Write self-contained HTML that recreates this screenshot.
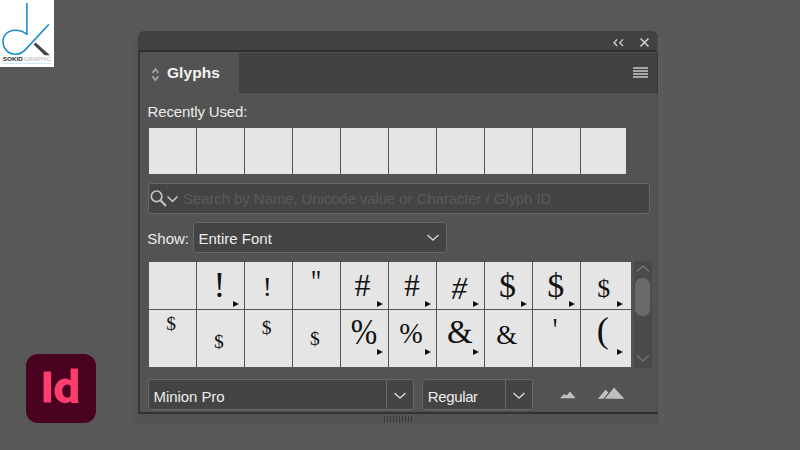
<!DOCTYPE html>
<html><head><meta charset="utf-8">
<style>
*{box-sizing:border-box;margin:0;padding:0}
html,body{width:800px;height:450px;overflow:hidden;background:#585858;font-family:"Liberation Sans",sans-serif;}
.abs{position:absolute}
#logo{left:0;top:0;width:54px;height:67px;background:#fff}
#panel{left:138px;top:31px;width:520px;height:394px;background:#535353;border-radius:6px 6px 0 0;overflow:hidden}
#titlebar{left:0;top:0;width:520px;height:20px;background:#424242}
#titleline{left:0;top:19.4px;width:520px;height:2px;background:#303030}
#tabrow{left:0;top:22px;width:520px;height:40px;background:#424242}
#tab{left:1px;top:22px;width:100px;height:41px;background:#535353}
#tabline{left:101px;top:61px;width:419px;height:1px;background:#3a3a3a}
.txt{color:#ececec;font-size:15px;white-space:nowrap;line-height:18px}
.cell{background:#e5e5e5;position:absolute}
.box{background:#444;border:1px solid #686868;border-radius:3px;position:absolute}
.g{position:absolute;font-family:"Liberation Serif",serif;color:#111;text-align:center;white-space:nowrap}
.tri{position:absolute;width:0;height:0;border-left:6px solid #111;border-top:3px solid transparent;border-bottom:3px solid transparent}
</style></head><body>
<div class="abs" id="logo">
<svg width="54" height="67" viewBox="0 0 54 67">
<path d="M26.9 3.6 V34.4 C24 31.7 19.5 30.2 15 30.2 C8 30.2 3 35.3 3 41.6 C3 48.8 8.5 54.2 15.5 54.2 C19.5 54.2 22.8 52.4 25.4 49.6 L48.5 24.8" fill="none" stroke="#1a8ccb" stroke-width="1.6" stroke-linecap="round" stroke-linejoin="round"/>
<path d="M35.6 42.6 L50 55.2 L44.6 55.2 L33.6 44.6 Z" fill="#454545"/>
<text x="2.8" y="60.9" font-family="Liberation Sans" font-size="4.7" font-weight="bold" fill="#2a2a2a" textLength="20" lengthAdjust="spacingAndGlyphs">SOKID</text>
<text x="24" y="60.9" font-family="Liberation Sans" font-size="4.7" fill="#b0b0b0" textLength="27" lengthAdjust="spacingAndGlyphs">GRAPHIC</text>
<rect x="3" y="62.9" width="48" height="1.1" fill="#cfe6f3"/>
</svg>
</div>

<div class="abs" style="left:133px;top:39px;width:5px;height:385px;background:#545454"></div>
<div class="abs" style="left:658px;top:39px;width:6px;height:386px;background:#5a5a5a"></div>
<div class="abs" id="panel">
 <div class="abs" id="titlebar"></div>
 <div class="abs" id="titleline"></div>
 <div class="abs" id="tabrow"></div>
 <div class="abs" id="tabline"></div>
 <div class="abs" id="tab"></div>
</div>

<div class="abs" style="left:138px;top:52px;width:1.5px;height:372.5px;background:#363636"></div>
<div class="abs" style="left:657px;top:38px;width:1px;height:375px;background:#4c4c4c"></div>
<div class="abs" style="left:657px;top:52px;width:1px;height:41px;background:#363636"></div>
<div class="abs" style="left:656.6px;top:413px;width:1.5px;height:11.5px;background:#343434"></div>
<!-- title bar icons -->
<svg class="abs" style="left:612px;top:37px" width="40" height="12" viewBox="0 0 40 12">
 <path d="M5.2 2.4 L2 5.7 L5.2 9 M11 2.4 L7.8 5.7 L11 9" fill="none" stroke="#d0d0d0" stroke-width="1.3"/>
 <path d="M28.5 1.5 L36.5 9.5 M36.5 1.5 L28.5 9.5" fill="none" stroke="#d0d0d0" stroke-width="1.6"/>
</svg>
<!-- hamburger -->
<div class="abs" style="left:633px;top:67px;width:15px;height:2px;background:#a8a8a8"></div>
<div class="abs" style="left:633px;top:70px;width:15px;height:2px;background:#a8a8a8"></div>
<div class="abs" style="left:633px;top:73px;width:15px;height:2px;background:#a8a8a8"></div>
<div class="abs" style="left:633px;top:76px;width:15px;height:2px;background:#a8a8a8"></div>

<!-- tab label -->
<svg class="abs" style="left:150px;top:66px" width="12" height="17" viewBox="150 66 12 17">
 <path d="M152.5 72.9 L155.4 69.2 L158.3 72.9 M152.5 76.3 L155.4 80 L158.3 76.3" fill="none" stroke="#a4a4a4" stroke-width="1.8"/>
</svg>
<div class="abs txt" style="left:167px;top:64.4px;font-weight:bold;font-size:15.5px;color:#f4f4f4;letter-spacing:0.05px">Glyphs</div>

<div class="abs txt" style="left:147.5px;top:103px;letter-spacing:-0.14px">Recently Used:</div>

<!-- recent cells -->
<div class="cell" style="left:149px;top:128px;width:47px;height:46px"></div>
<div class="cell" style="left:197px;top:128px;width:47px;height:46px"></div>
<div class="cell" style="left:245px;top:128px;width:47px;height:46px"></div>
<div class="cell" style="left:293px;top:128px;width:47px;height:46px"></div>
<div class="cell" style="left:341px;top:128px;width:47px;height:46px"></div>
<div class="cell" style="left:389px;top:128px;width:47px;height:46px"></div>
<div class="cell" style="left:437px;top:128px;width:47px;height:46px"></div>
<div class="cell" style="left:485px;top:128px;width:47px;height:46px"></div>
<div class="cell" style="left:533px;top:128px;width:47px;height:46px"></div>
<div class="cell" style="left:581px;top:128px;width:45px;height:46px"></div>

<!-- search -->
<div class="box" style="left:148px;top:183px;width:502px;height:31px"></div>
<svg class="abs" style="left:148px;top:186px" width="34" height="24" viewBox="0 0 34 24">
 <circle cx="8.6" cy="10.3" r="5.3" fill="none" stroke="#c2c2c2" stroke-width="1.7"/>
 <path d="M12.4 14.3 L18 20" stroke="#c2c2c2" stroke-width="2.2" fill="none"/>
 <path d="M19.5 10.5 L24.5 15.3 L29.5 10.5" stroke="#c2c2c2" stroke-width="1.7" fill="none"/>
</svg>
<div class="abs txt" style="left:183px;top:190px;color:#5a5a5a;letter-spacing:-0.1px">Search by Name, Unicode value or Character / Glyph ID</div>

<!-- show -->
<div class="abs txt" style="left:147.3px;top:230px">Show:</div>
<div class="box" style="left:193px;top:222px;width:254px;height:31px"></div>
<div class="abs txt" style="left:198.5px;top:230px">Entire Font</div>
<svg class="abs" style="left:426px;top:232px" width="14" height="10" viewBox="0 0 14 10"><path d="M1.5 3 L7 8 L12.5 3" fill="none" stroke="#d6d6d6" stroke-width="1.3"/></svg>

<!-- grid -->
<div class="cell" style="left:149px;top:262px;width:47px;height:47px"></div>
<div class="cell" style="left:197px;top:262px;width:47px;height:47px"></div>
<div class="cell" style="left:245px;top:262px;width:47px;height:47px"></div>
<div class="cell" style="left:293px;top:262px;width:47px;height:47px"></div>
<div class="cell" style="left:341px;top:262px;width:47px;height:47px"></div>
<div class="cell" style="left:389px;top:262px;width:47px;height:47px"></div>
<div class="cell" style="left:437px;top:262px;width:47px;height:47px"></div>
<div class="cell" style="left:485px;top:262px;width:47px;height:47px"></div>
<div class="cell" style="left:533px;top:262px;width:47px;height:47px"></div>
<div class="cell" style="left:581px;top:262px;width:50px;height:47px"></div>
<div class="cell" style="left:149px;top:310px;width:47px;height:57px"></div>
<div class="cell" style="left:197px;top:310px;width:47px;height:57px"></div>
<div class="cell" style="left:245px;top:310px;width:47px;height:57px"></div>
<div class="cell" style="left:293px;top:310px;width:47px;height:57px"></div>
<div class="cell" style="left:341px;top:310px;width:47px;height:57px"></div>
<div class="cell" style="left:389px;top:310px;width:47px;height:57px"></div>
<div class="cell" style="left:437px;top:310px;width:47px;height:57px"></div>
<div class="cell" style="left:485px;top:310px;width:47px;height:57px"></div>
<div class="cell" style="left:533px;top:310px;width:47px;height:57px"></div>
<div class="cell" style="left:581px;top:310px;width:50px;height:57px"></div>
<div class="g" id="g0_1" style="left:189.40px;top:267.72px;width:60px;font-size:35.5px;line-height:35.5px;">!</div>
<div class="tri" style="left:233px;top:301px"></div>
<div class="g" id="g0_2" style="left:237.20px;top:274.15px;width:60px;font-size:27px;line-height:27px;">!</div>
<div class="g" id="g0_3" style="left:285.60px;top:265.10px;width:60px;font-size:34px;line-height:34px;transform:scaleX(0.76);">"</div>
<div class="g" id="g0_4" style="left:332.50px;top:268.90px;width:60px;font-size:32px;line-height:32px;">#</div>
<div class="tri" style="left:377px;top:301px"></div>
<div class="g" id="g0_5" style="left:382.00px;top:270.30px;width:60px;font-size:31px;line-height:31px;">#</div>
<div class="tri" style="left:425px;top:301px"></div>
<div class="g" id="g0_6" style="left:429.20px;top:273.02px;width:60px;font-size:31px;line-height:31px;font-style:italic;">#</div>
<div class="tri" style="left:473px;top:301px"></div>
<div class="g" id="g0_7" style="left:477.60px;top:269.08px;width:60px;font-size:34px;line-height:34px;">$</div>
<div class="tri" style="left:521px;top:301px"></div>
<div class="g" id="g0_8" style="left:525.70px;top:268.58px;width:60px;font-size:34px;line-height:34px;">$</div>
<div class="tri" style="left:569px;top:301px"></div>
<div class="g" id="g0_9" style="left:573.70px;top:275.82px;width:60px;font-size:25.8px;line-height:25.8px;">$</div>
<div class="tri" style="left:617px;top:301px"></div>
<div class="g" id="g1_0" style="left:141.00px;top:314.38px;width:60px;font-size:19.5px;line-height:19.5px;">$</div>
<div class="g" id="g1_1" style="left:188.90px;top:332.25px;width:60px;font-size:19.5px;line-height:19.5px;">$</div>
<div class="g" id="g1_2" style="left:236.70px;top:317.82px;width:60px;font-size:19.5px;line-height:19.5px;">$</div>
<div class="g" id="g1_3" style="left:284.80px;top:328.63px;width:60px;font-size:19.5px;line-height:19.5px;">$</div>
<div class="g" id="g1_4" style="left:334.00px;top:313.88px;width:60px;font-size:36.5px;line-height:36.5px;transform:scaleX(0.87);">%</div>
<div class="tri" style="left:377px;top:349px"></div>
<div class="g" id="g1_5" style="left:381.30px;top:318.40px;width:60px;font-size:30px;line-height:30px;transform:scaleX(0.94);">%</div>
<div class="tri" style="left:425px;top:349px"></div>
<div class="g" id="g1_6" style="left:429.90px;top:316.12px;width:60px;font-size:33px;line-height:33px;">&amp;</div>
<div class="tri" style="left:473px;top:349px"></div>
<div class="g" id="g1_7" style="left:476.80px;top:322.25px;width:60px;font-size:27px;line-height:27px;">&amp;</div>
<div class="g" id="g1_8" style="left:525.30px;top:313.25px;width:60px;font-size:34px;line-height:34px;transform:scaleX(0.76);">'</div>
<div class="g" id="g1_9" style="left:572.70px;top:312.12px;width:60px;font-size:36px;line-height:36px;">(</div>
<div class="tri" style="left:617px;top:349px"></div>

<!-- scrollbar -->
<div class="abs" style="left:634px;top:261px;width:18px;height:107px;background:#4a4a4a"></div>
<div class="abs" style="left:635px;top:278px;width:15px;height:38px;background:#6a6a6a;border-radius:7px"></div>
<svg class="abs" style="left:635px;top:264px" width="16" height="10" viewBox="0 0 16 10"><path d="M2 7.5 L8 2 L14 7.5" fill="none" stroke="#777" stroke-width="1.2"/></svg>
<svg class="abs" style="left:635px;top:353px" width="16" height="10" viewBox="0 0 16 10"><path d="M2 2.5 L8 8 L14 2.5" fill="none" stroke="#777" stroke-width="1.2"/></svg>

<!-- bottom -->
<div class="box" style="left:148px;top:379px;width:266px;height:31px"></div>
<div class="abs" style="left:386px;top:380px;width:1px;height:29px;background:#686868"></div>
<div class="abs txt" style="left:153.6px;top:388px;letter-spacing:-0.08px">Minion Pro</div>
<svg class="abs" style="left:393px;top:390px" width="14" height="10" viewBox="0 0 14 10"><path d="M1.5 3 L7 8 L12.5 3" fill="none" stroke="#d6d6d6" stroke-width="1.3"/></svg>

<div class="box" style="left:422px;top:379px;width:111px;height:31px"></div>
<div class="abs" style="left:505px;top:380px;width:1px;height:29px;background:#686868"></div>
<div class="abs txt" style="left:427.7px;top:388px;letter-spacing:-0.35px">Regular</div>
<svg class="abs" style="left:512px;top:390px" width="14" height="10" viewBox="0 0 14 10"><path d="M1.5 3 L7 8 L12.5 3" fill="none" stroke="#d6d6d6" stroke-width="1.3"/></svg>

<svg class="abs" style="left:550px;top:378px" width="90" height="32" viewBox="550 378 90 32">
 <path d="M560 398.3 L564.1 394 L566.6 395.6 L570 391.6 L575.6 398.3 Z" fill="#c0c0c0"/>
 <path d="M597.8 398.8 L605.6 389.7 L608.4 392.6 L603.6 398.8 Z" fill="#c0c0c0"/>
 <path d="M604.9 398.8 L614.1 387.6 L624.3 398.8 Z" fill="#c0c0c0"/>
</svg>

<!-- bottom bar -->
<div class="abs" style="left:138px;top:411.5px;width:520px;height:3px;background:linear-gradient(#2e2e2e,#333 50%,#484848)"></div>
<div class="abs" style="left:138px;top:414px;width:520px;height:11px;background:#535353"></div>
<div class="abs" id="grip" style="left:384px;top:416px;width:28px;height:6px;background:repeating-linear-gradient(90deg,#383838 0 1px,transparent 1px 3px)"></div>

<!-- Id icon -->
<div class="abs" style="left:26px;top:354px;width:70px;height:69.4px;background:#49021f;border-radius:12px"></div>
<svg class="abs" style="left:26px;top:354px" width="70" height="70" viewBox="26 354 70 70">
<rect x="43.6" y="371.4" width="7.5" height="31.2" rx="0.6" fill="#ff3d6e"/>
<path fill-rule="evenodd" fill="#ff3d6e" d="M65 378.6 A10.5 12.3 0 1 0 65 403.2 A10.5 12.3 0 1 0 65 378.6 Z M67.3 384.6 A5.2 6.5 0 1 1 67.3 397.6 A5.2 6.5 0 1 1 67.3 384.6 Z"/>
<path fill="#ff3d6e" d="M70.6 368.6 H77.9 V398.5 C77.9 400.5 78.1 401.8 78.4 402.9 H72.3 C71.2 402.9 70.6 402.2 70.6 401 Z"/>
</svg>


</body></html>
